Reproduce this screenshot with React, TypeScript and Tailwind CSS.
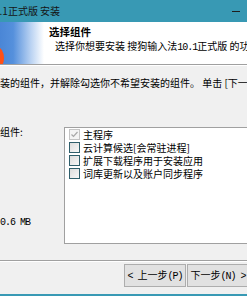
import React from "react";

const Mono = ({ children }: { children: React.ReactNode }) => (
  <span className="font-['Liberation_Mono',monospace] tracking-[-1px]">{children}</span>
);

const Check = ({ disabled }: { disabled?: boolean }) =>
  disabled ? (
    <div className="w-[11px] h-[11px] border border-[#c4c4c4] bg-[#f4f4f4] flex items-center justify-center shrink-0">
      <svg width="9" height="9" viewBox="0 0 9 9">
        <path d="M1.5 4.5 L3.5 6.5 L7.5 2" fill="none" stroke="#a8a8a8" strokeWidth="1.2" />
      </svg>
    </div>
  ) : (
    <div className="w-[11px] h-[11px] border border-[#2f5e6b] bg-[linear-gradient(135deg,#dcdcdc_0%,#f7f7f7_100%)] shrink-0" />
  );

export default function App() {
  const items = [
    { t: "主程序", d: true },
    { t: "云计算候选[会常驻进程]" },
    { t: "扩展下载程序用于安装应用" },
    { t: "词库更新以及账户同步程序" },
  ];
  return (
    <div className="w-[247px] h-[296px] overflow-hidden bg-[#f0f0f0] flex flex-col font-['Noto_Sans_CJK_SC','Noto_Sans',sans-serif] text-[10px] leading-[12px] text-black">
      {/* title bar */}
      <div className="h-[22px] shrink-0 bg-[#3899b4] flex items-center justify-between">
        <span className="ml-[-6px] whitespace-nowrap text-[#151515]">0.1正式版 安装</span>
        <div className="w-[8px] h-px bg-[#1e1e1e] mr-[7px]" />
      </div>
      {/* header */}
      <div className="h-[42px] shrink-0 bg-white flex">
        <div className="w-[44px] h-full shrink-0 bg-[linear-gradient(90deg,#4a86d6_0%,#5590dc_30%,#b9d2f2_70%,#ffffff_100%)]">
          <svg width="44" height="42" viewBox="0 0 44 42">
            <ellipse cx="-3" cy="36" rx="7" ry="11" fill="#ff5016" />
          </svg>
        </div>
        <div className="flex flex-col pt-[4px] whitespace-nowrap">
          <div className="ml-[5px] font-bold text-[10.5px]">选择组件</div>
          <div className="ml-[11px] mt-[2px]">
            选择你想要安装 搜狗输入法<Mono>10.1</Mono>正式版 的功能。
          </div>
        </div>
      </div>
      <div className="h-px shrink-0 bg-[#a0a0a0]" />
      <div className="h-px shrink-0 bg-white" />
      {/* body */}
      <div className="pt-[11px] whitespace-nowrap shrink-0">
        装的组件，并解除勾选你不希望安装的组件。 单击 [下一步(N)] 继续。
      </div>
      <div className="mt-[38px] flex shrink-0">
        <div className="w-[64px] shrink-0 flex flex-col">
          <div className="mt-[-1px] whitespace-nowrap">组件:</div>
          <div className="mt-auto mb-[15px] whitespace-nowrap">
            <Mono>0.6 MB</Mono>
          </div>
        </div>
        <div className="w-[190px] h-[117px] shrink-0 bg-white border border-[#a0a0a0] flex flex-col">
          {items.map((it) => (
            <div key={it.t} className="h-[13px] flex items-center pl-[4px] gap-[3px] whitespace-nowrap">
              <Check disabled={it.d} />
              <span>{it.t}</span>
            </div>
          ))}
        </div>
      </div>
      <div className="mt-[16px] h-px shrink-0 bg-[#a0a0a0]" />
      <div className="h-px shrink-0 bg-white" />
      <div className="mt-[2px] flex pl-[124px] gap-[1px] shrink-0">
        <div className="w-[62px] h-[23px] shrink-0 bg-[#e1e1e1] border border-[#adadad] flex items-center justify-center whitespace-nowrap">
          <span>
            <Mono>{"<\u00a0"}</Mono>上一步<Mono>(P)</Mono>
          </span>
        </div>
        <div className="w-[62px] h-[23px] shrink-0 bg-[#e1e1e1] border border-[#adadad] flex items-center justify-center whitespace-nowrap">
          <span>
            下一步<Mono>{"(N)\u00a0>"}</Mono>
          </span>
        </div>
      </div>
      <div className="mt-auto h-[2px] shrink-0 bg-[#3899b4]" />
    </div>
  );
}
